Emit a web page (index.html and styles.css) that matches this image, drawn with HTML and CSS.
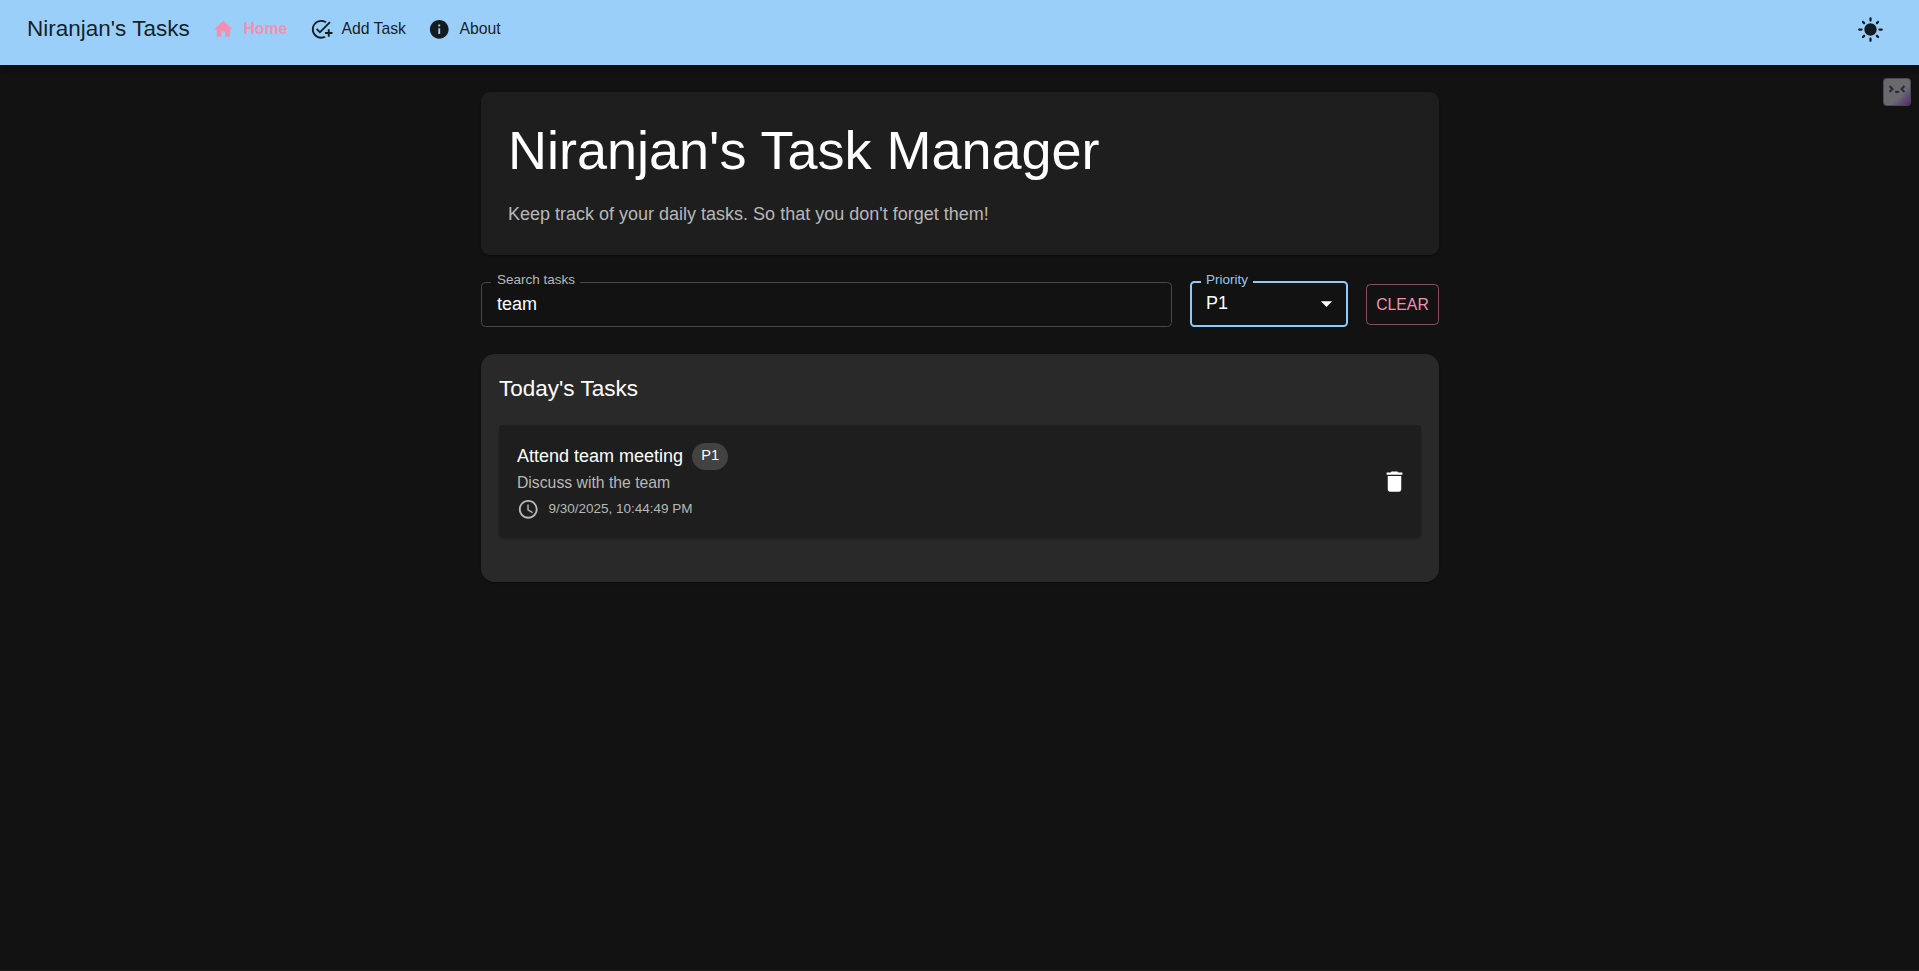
FILE: index.html
```html
<!DOCTYPE html>
<html lang="en">
<head>
<meta charset="utf-8">
<title>Niranjan's Tasks</title>
<link rel="stylesheet" href="styles.css">
</head>
<body>
<header class="appbar">
  <div class="brand">Niranjan's Tasks</div>
  <nav class="nav">
    <a class="nav-link active"><svg class="icon-sm" viewBox="0 0 24 24"><path d="M10 20v-6h4v6h5v-8h3L12 3 2 12h3v8z"/></svg><span>Home</span></a>
    <a class="nav-link add"><svg class="icon-sm" viewBox="0 0 24 24"><path d="M22 5.18 10.59 16.6l-4.24-4.24 1.41-1.41 2.83 2.83 10-10zM12 20c-4.41 0-8-3.59-8-8s3.59-8 8-8c1.57 0 3.04.46 4.28 1.25l1.45-1.45C16.1 2.67 14.13 2 12 2 6.48 2 2 6.48 2 12s4.48 10 10 10c1.73 0 3.36-.44 4.78-1.22l-1.5-1.5c-1 .46-2.11.72-3.28.72m7-5h-3v2h3v3h2v-3h3v-2h-3v-3h-2z"/></svg><span>Add Task</span></a>
    <a class="nav-link about"><svg class="icon-sm" viewBox="0 0 24 24"><path d="M12 2C6.48 2 2 6.48 2 12s4.48 10 10 10 10-4.480 10-10S17.520 2 12 2m1 15h-2v-6h2zm0-8h-2V7h2z"/></svg><span>About</span></a>
  </nav>
  <svg class="icon theme" viewBox="0 0 24 24"><path d="M12 6.500a5.500 5.500 0 1 0 0 11 5.500 5.500 0 0 0 0-11M2 13h2c.55 0 1-.45 1-1s-.45-1-1-1H2c-.55 0-1 .45-1 1s.45 1 1 1m18 0h2c.55 0 1-.45 1-1s-.45-1-1-1h-2c-.55 0-1 .45-1 1s.45 1 1 1M11 2v2c0 .55.45 1 1 1s1-.45 1-1V2c0-.55-.45-1-1-1s-1 .45-1 1m0 18v2c0 .55.45 1 1 1s1-.45 1-1v-2c0-.55-.45-1-1-1s-1 .45-1 1M5.990 4.580c-.39-.39-1.030-.39-1.410 0-.39.390-.39 1.030 0 1.410l1.060 1.060c.39.390 1.030.390 1.410 0s.390-1.030 0-1.410zm12.370 12.370c-.39-.39-1.030-.39-1.410 0-.39.390-.39 1.030 0 1.410l1.060 1.060c.39.390 1.030.390 1.410 0 .390-.39.390-1.030 0-1.410zm1.060-10.960c.390-.39.390-1.030 0-1.410-.39-.39-1.030-.39-1.410 0l-1.060 1.060c-.39.390-.39 1.030 0 1.410s1.030.390 1.410 0zM7.050 18.360c.390-.39.390-1.030 0-1.410-.39-.39-1.030-.39-1.410 0l-1.060 1.060c-.39.390-.39 1.030 0 1.410s1.030.390 1.410 0z"/></svg>
</header>
<svg class="face" viewBox="0 0 28 28"><defs><linearGradient id="faceFill" x1="0" y1="0" x2="1" y2="1"><stop offset="0" stop-color="#68686c"/><stop offset=".62" stop-color="#6b6a70"/><stop offset="1" stop-color="#4d2473"/></linearGradient></defs><rect x=".5" y=".5" width="27" height="27" rx="3" fill="url(#faceFill)" stroke="#484a54"/><path d="M6.500 8l3 3-3 3M21.500 8l-3 3 3 3M12.300 13.300q1.700 1.700 3.700 0" fill="none" stroke="#292a33" stroke-width="2"/></svg>
<main class="container">
  <section class="hero">
    <h1 class="hero-title">Niranjan's Task Manager</h1>
    <p class="hero-text">Keep track of your daily tasks. So that you don't forget them!</p>
  </section>
  <div class="filters">
    <fieldset class="field search"><legend class="label">Search tasks</legend><div class="value">team</div></fieldset>
    <fieldset class="field priority"><legend class="label">Priority</legend><div class="value"><span>P1</span><svg class="icon arrow" viewBox="0 0 24 24"><path d="m7 10 5 5 5-5z"/></svg></div></fieldset>
    <button class="clear">CLEAR</button>
  </div>
  <section class="tasks">
    <h2 class="tasks-title">Today's Tasks</h2>
    <article class="task">
      <div class="task-body">
        <div class="task-head"><span class="task-name">Attend team meeting</span><span class="chip">P1</span></div>
        <div class="task-desc">Discuss with the team</div>
        <div class="task-time"><svg class="icon-sm clock" viewBox="0 0 24 24"><path d="M11.990 2C6.470 2 2 6.480 2 12s4.470 10 9.990 10C17.520 22 22 17.520 22 12S17.520 2 11.990 2M12 20c-4.420 0-8-3.580-8-8s3.580-8 8-8 8 3.580 8 8-3.580 8-8 8m.5-13H11v6l5.250 3.150.75-1.230-4.500-2.670z"/></svg><span>9/30/2025, 10:44:49 PM</span></div>
      </div>
      <svg class="icon trash" viewBox="0 0 24 24"><path d="M6 19c0 1.100.9 2 2 2h8c1.100 0 2-.9 2-2V7H6zM19 4h-3.500l-1-1h-5l-1 1H5v2h14z"/></svg>
    </article>
  </section>
</main>
</body>
</html>
```
FILE: styles.css
```css
* { box-sizing: border-box; }
body {
  margin: 0;
  min-height: 971px;
  background: #121212;
  color: #fff;
  font-family: "Liberation Sans", Arial, sans-serif;
  font-size: 18px;
  border-bottom: 1px solid #1e191c;
}
svg { display: block; flex: none; fill: currentColor; }
.icon { width: 27px; height: 27px; }
.icon-sm { width: 22.5px; height: 22.5px; }

.appbar {
  display: flex;
  align-items: center;
  height: 65px;
  padding: 0 35px 8px 27px;
  background: #9acffa;
  color: rgba(0, 0, 0, .87);
  box-shadow: 0 2px 4px -1px rgba(0,0,0,.2), 0 4px 5px rgba(0,0,0,.14), 0 1px 10px rgba(0,0,0,.12);
}
.brand { width: 185px; font-size: 22.5px; line-height: 36px; white-space: nowrap; }
.nav { display: flex; flex: 1; font-size: 15.75px; line-height: 23px; }
.nav-link { display: flex; align-items: center; gap: 9px; width: 98px; white-space: nowrap; }
.nav-link .icon-sm { margin-top: 1px; }
.nav-link.add { width: 118px; }
.active { color: #f48fb1; font-weight: 700; }
.theme { margin-top: 1px; }
.face { position: absolute; left: 1883px; top: 78px; width: 28px; height: 28px; }

.container { width: 958px; margin: 27px auto 0 481px; }
.hero {
  height: 163px;
  padding: 26px 27px 27px;
  border-radius: 9px;
  background: #1e1e1e;
  box-shadow: 0 2px 1px -1px rgba(0,0,0,.2), 0 1px 1px rgba(0,0,0,.14), 0 1px 3px rgba(0,0,0,.12);
}
.hero-title { margin: 0 0 19px; font-size: 54px; font-weight: 400; line-height: 64px; }
.hero-text { margin: 0; line-height: 27px; color: #b8b8b8; }

.filters { display: flex; align-items: flex-end; gap: 18px; margin-top: 18px; height: 54px; }
.field { min-width: 0; height: 53px; margin: 0; border: 1px solid #484848; border-radius: 4.5px; }
.label { height: 16px; padding: 0 5px; font-size: 13.5px; line-height: 11px; color: #b8b8b8; white-space: nowrap; }
.value { display: flex; align-items: center; justify-content: space-between; height: 29px; line-height: 27px; }
.search { width: 691px; padding: 0 10px 0 9px; }
.search .label { padding: 0 5px 0 6px; }
.search .value { padding: 0 6px; }
.priority { width: 158px; padding: 0 6px 0 9px; border: 2px solid #90caf9; }
.priority .label { color: #90caf9; }
.priority .value { padding-left: 5px; height: 27px; }
.clear {
  width: 73px;
  height: 41px;
  margin-bottom: 2px;
  padding: 0;
  border: 1px solid rgba(244,143,177,.5);
  border-radius: 4.5px;
  background: none;
  color: #f48fb1;
  font: 15.75px "Liberation Sans", Arial, sans-serif;
}

.tasks {
  height: 228px;
  margin-top: 27px;
  padding: 17px 18px;
  border-radius: 13.5px;
  background: #292929;
  box-shadow: 0 2px 1px -1px rgba(0,0,0,.2), 0 1px 1px rgba(0,0,0,.14), 0 1px 3px rgba(0,0,0,.12);
}
.tasks-title { margin: 0 0 18px; font-size: 22.5px; font-weight: 400; line-height: 36px; }
.task {
  display: flex;
  align-items: center;
  justify-content: space-between;
  height: 113px;
  padding: 18px 13px 18px 18px;
  border-radius: 4.5px;
  background: #1e1e1e;
  box-shadow: 0 1px 2px rgba(0,0,0,.2);
}
.task-body { align-self: flex-start; }
.task-head { display: flex; align-items: center; height: 27px; gap: 9px; }
.task-name { padding-bottom: 1px; }
.chip { width: 36px; height: 27px; border-radius: 13.5px; background: #424242; font-size: 14.6px; line-height: 25px; text-align: center; }
.task-desc { height: 27px; font-size: 15.75px; line-height: 25px; color: #b8b8b8; }
.task-time { display: flex; align-items: center; gap: 9px; height: 24px; font-size: 13.5px; line-height: 22px; color: #b8b8b8; }
```
